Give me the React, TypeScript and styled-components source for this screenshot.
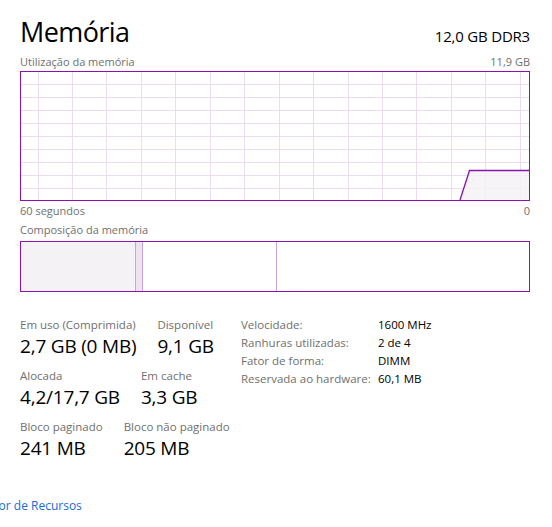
import styled, { createGlobalStyle } from "styled-components";
import React from "react";

const Global = createGlobalStyle`
  html, body {
    margin: 0;
    padding: 0;
    background: #ffffff;
    overflow: hidden;
  }
  body {
    font-family: "Open Sans", "Noto Sans", sans-serif;
    color: #000000;
  }
`;

const PURPLE = "#8b12ae";
const GRID = "#ecdcf2";
const FILL = "#f4f2f5";
const SEP = "#cba3dc";

const Page = styled.div`
  width: 552px;
  height: 527px;
  box-sizing: border-box;
  padding: 14px 22px 0 20px;
  display: flex;
  flex-direction: column;
`;

const Header = styled.div`
  display: flex;
  justify-content: space-between;
  align-items: baseline;
  height: 40px;
`;

const Title = styled.h1`
  margin: 0;
  font-size: 27px;
  font-weight: 400;
  letter-spacing: -0.6px;
  line-height: 36px;
`;

const Spec = styled.div`
  font-size: 15px;
  letter-spacing: -0.2px;
`;

const Caption = styled.div<{ $gap?: number }>`
  display: flex;
  justify-content: space-between;
  font-size: 11px;
  line-height: 15px;
  color: #6f6f6f;
  margin-top: ${(p) => p.$gap ?? 0}px;
`;

const Chart = styled.div`
  margin-top: 2px;
  width: 510px;
  height: 130px;
  box-sizing: border-box;
  border: 1px solid ${PURPLE};
  background: #ffffff;
  svg {
    display: block;
  }
`;

const Composition = styled.div`
  margin-top: 4px;
  width: 510px;
  height: 51px;
  box-sizing: border-box;
  border: 1px solid ${PURPLE};
  display: flex;
`;

const Segment = styled.div<{ $w: number; $bg: string; $sep?: boolean }>`
  width: ${(p) => p.$w}px;
  flex: ${(p) => (p.$w ? "none" : "1")};
  background: ${(p) => p.$bg};
  border-right: ${(p) => (p.$sep ? `1px solid ${SEP}` : "none")};
`;

const Stats = styled.div`
  margin-top: 25px;
  display: flex;
`;

const LeftStats = styled.div`
  width: 221px;
  display: flex;
  flex-direction: column;
  gap: 9px;
`;

const StatRow = styled.div`
  display: flex;
  gap: 21px;
`;

const Stat = styled.div`
  display: flex;
  flex-direction: column;
`;

const StatLabel = styled.div`
  font-size: 11.5px;
  line-height: 16px;
  color: #6f6f6f;
  white-space: nowrap;
`;

const StatValue = styled.div`
  font-size: 19px;
  line-height: 26px;
  letter-spacing: -0.2px;
  white-space: nowrap;
`;

const Specs = styled.div`
  display: grid;
  grid-template-columns: 137px auto;
  grid-auto-rows: 18px;
  font-size: 11.5px;
  line-height: 16px;
  align-items: center;
  margin-top: -1px;
`;

const SpecLabel = styled.div`
  color: #6f6f6f;
  white-space: nowrap;
`;

const SpecValue = styled.div`
  color: #000000;
  white-space: nowrap;
`;

const Footer = styled.div`
  margin-top: auto;
  height: 30px;
  display: flex;
  align-items: flex-start;
`;

const Link = styled.a`
  margin-left: -85px;
  font-size: 12px;
  color: #1a6ad6;
  text-decoration: none;
  white-space: nowrap;
  cursor: pointer;
`;

function UsageChart() {
  const w = 508;
  const h = 128;
  const rows = Array.from({ length: 9 }, (_, i) => (i + 1) * 13);
  const cols = Array.from({ length: 15 }, (_, i) => 16.5 + i * 34.45);
  return (
    <svg width={w} height={h} viewBox={`0 0 ${w} ${h}`}>
      {rows.map((y) => (
        <line key={"r" + y} x1={0} x2={w} y1={y - 0.5} y2={y - 0.5} stroke={GRID} strokeWidth={1} />
      ))}
      {cols.map((x) => (
        <line key={"c" + x} x1={Math.round(x) + 0.5} x2={Math.round(x) + 0.5} y1={0} y2={h} stroke={GRID} strokeWidth={1} />
      ))}
      <polygon points={`439,${h} 448.5,98.5 ${w},98.5 ${w},${h}`} fill={FILL} fillOpacity={0.85} />
      <polyline points={`439,${h} 448.5,98.5 ${w},98.5`} fill="none" stroke={PURPLE} strokeWidth={1.3} />
    </svg>
  );
}

function App() {
  return (
    <>
      <Global />
      <Page>
        <Header>
          <Title>Memória</Title>
          <Spec>12,0 GB DDR3</Spec>
        </Header>
        <Caption $gap={0}>
          <span>Utilização da memória</span>
          <span>11,9 GB</span>
        </Caption>
        <Chart>
          <UsageChart />
        </Chart>
        <Caption $gap={2}>
          <span>60 segundos</span>
          <span>0</span>
        </Caption>
        <Caption $gap={4}>
          <span>Composição da memória</span>
        </Caption>
        <Composition>
          <Segment $w={114} $bg={FILL} $sep />
          <Segment $w={6} $bg="#ede3f1" $sep />
          <Segment $w={133} $bg="#ffffff" $sep />
          <Segment $w={0} $bg="#ffffff" />
        </Composition>
        <Stats>
          <LeftStats>
            <StatRow>
              <Stat>
                <StatLabel>Em uso (Comprimida)</StatLabel>
                <StatValue>2,7 GB (0 MB)</StatValue>
              </Stat>
              <Stat>
                <StatLabel>Disponível</StatLabel>
                <StatValue>9,1 GB</StatValue>
              </Stat>
            </StatRow>
            <StatRow>
              <Stat>
                <StatLabel>Alocada</StatLabel>
                <StatValue>4,2/17,7 GB</StatValue>
              </Stat>
              <Stat>
                <StatLabel>Em cache</StatLabel>
                <StatValue>3,3 GB</StatValue>
              </Stat>
            </StatRow>
            <StatRow>
              <Stat>
                <StatLabel>Bloco paginado</StatLabel>
                <StatValue>241 MB</StatValue>
              </Stat>
              <Stat>
                <StatLabel>Bloco não paginado</StatLabel>
                <StatValue>205 MB</StatValue>
              </Stat>
            </StatRow>
          </LeftStats>
          <Specs>
            <SpecLabel>Velocidade:</SpecLabel>
            <SpecValue>1600 MHz</SpecValue>
            <SpecLabel>Ranhuras utilizadas:</SpecLabel>
            <SpecValue>2 de 4</SpecValue>
            <SpecLabel>Fator de forma:</SpecLabel>
            <SpecValue>DIMM</SpecValue>
            <SpecLabel>Reservada ao hardware:</SpecLabel>
            <SpecValue>60,1 MB</SpecValue>
          </Specs>
        </Stats>
        <Footer>
          <Link>Abrir Monitor de Recursos</Link>
        </Footer>
      </Page>
    </>
  );
}

export default App;
